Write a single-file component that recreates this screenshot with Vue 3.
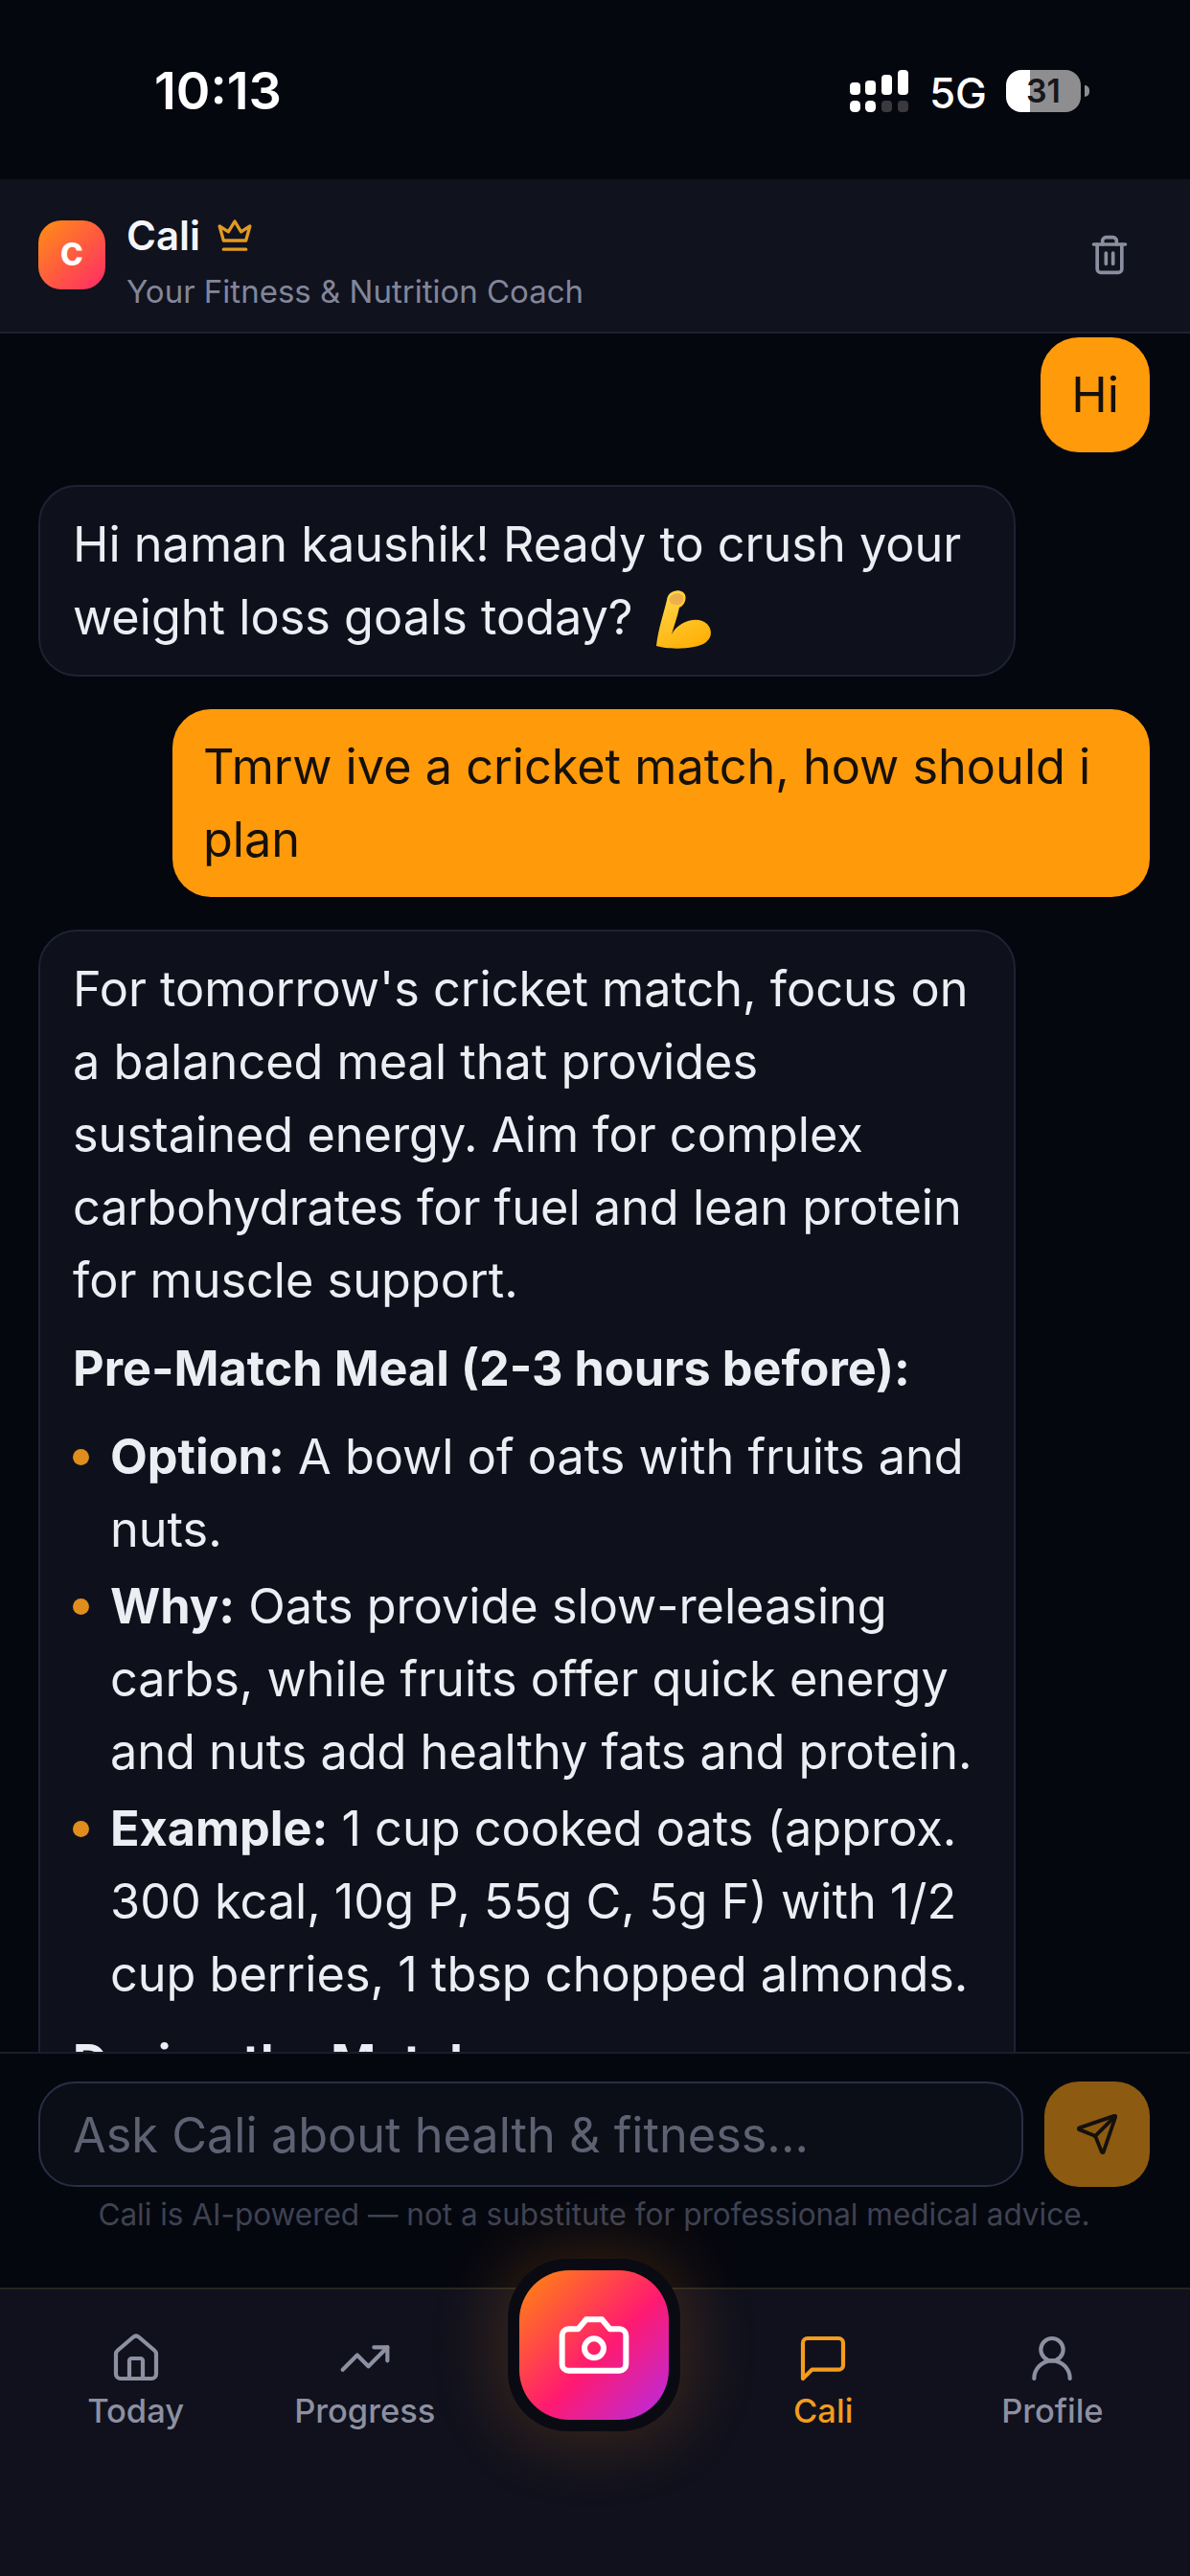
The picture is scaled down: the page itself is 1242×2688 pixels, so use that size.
<script setup>
const navLeft = [
  { label: 'Today', icon: 'home' },
  { label: 'Progress', icon: 'trend' },
]
const navRight = [
  { label: 'Cali', icon: 'chat', active: true },
  { label: 'Profile', icon: 'user' },
]
const tips = [
  { lead: 'Option:', text: ' A bowl of oats with fruits and nuts.' },
  { lead: 'Why:', text: ' Oats provide slow-releasing carbs, while fruits offer quick energy and nuts add healthy fats and protein.' },
  { lead: 'Example:', text: ' 1 cup cooked oats (approx. 300 kcal, 10g P, 55g C, 5g F) with 1/2 cup berries, 1 tbsp chopped almonds.' },
]
</script>

<template>
  <div class="app">
    <div class="status">
      <span class="time">10:13</span>
      <div class="status-right">
        <svg class="signal" width="66" height="46" viewBox="0 0 66 46" fill="#fff">
          <rect x="1" y="14" width="11" height="13" rx="4" />
          <rect x="17" y="12" width="11" height="15" rx="4" />
          <rect x="34" y="6" width="11" height="21" rx="4" />
          <rect x="51" y="1" width="11" height="26" rx="4" />
          <rect x="1" y="33" width="11" height="12" rx="4.5" />
          <rect x="17" y="33" width="11" height="12" rx="4.5" />
          <rect x="34" y="33" width="11" height="12" rx="4" fill="#3a3a3e" />
          <rect x="51" y="33" width="11" height="12" rx="4" fill="#3a3a3e" />
        </svg>
        <span class="net">5G</span>
        <div class="battery"><span>31</span></div>
        <span class="nub"></span>
      </div>
    </div>

    <header class="head">
      <div class="logo">C</div>
      <div class="title">
        <div class="name">
          <span>Cali</span>
          <svg width="40" height="40" viewBox="0 0 24 24" fill="none" stroke="#e39a22" stroke-width="2" stroke-linejoin="round" stroke-linecap="round">
            <path d="M5 15 2.500 6l5.500 3.500L12 3l4 6.500L21.500 6 19 15z" />
            <path d="M5 20.500h14" />
          </svg>
        </div>
        <div class="sub">Your Fitness &amp; Nutrition Coach</div>
      </div>
      <svg class="trash" width="44" height="44" viewBox="0 0 24 24" fill="none" stroke="#8b8e9e" stroke-width="2" stroke-linecap="round" stroke-linejoin="round">
        <path d="M3 6h18" />
        <path d="M19 6v14a2 2 0 0 1-2 2H7a2 2 0 0 1-2-2V6" />
        <path d="M8 6V4a2 2 0 0 1 2-2h4a2 2 0 0 1 2 2v2" />
        <path d="M10 11v6M14 11v6" />
      </svg>
    </header>

    <main class="msgs">
      <div class="bubble user">Hi</div>
      <div class="bubble ai">
        Hi naman kaushik! Ready to crush your weight loss goals today?
        <svg class="emoji" width="60" height="66" viewBox="0 0 60 66">
          <defs>
            <linearGradient id="arm" x1="0.2" y1="0" x2="0.6" y2="1">
              <stop offset="0" stop-color="#ffd84a" />
              <stop offset="1" stop-color="#ffb007" />
            </linearGradient>
          </defs>
          <path fill="url(#arm)" d="M2 60C4 42 10 25 13 12C14 3 24 0 30 4C35 8 32 18 26 20C24 30 20 40 18 48C24 36 40 30 50 34C60 38 62 50 54 56C44 64 14 64 2 60Z" />
          <path fill="#eeb04a" d="M16 10c2-5 10-6 13-3s1 9-4 10-11-2-9-7z" />
        </svg>
      </div>
      <div class="bubble user">Tmrw ive a cricket match, how should i plan</div>
      <div class="bubble ai long">
        <p>For tomorrow's cricket match, focus on a balanced meal that provides sustained energy. Aim for complex carbohydrates for fuel and lean protein for muscle support.</p>
        <p class="strong">Pre-Match Meal (2-3 hours before):</p>
        <ul>
          <li v-for="tip in tips" :key="tip.lead"><b>{{ tip.lead }}</b>{{ tip.text }}</li>
        </ul>
        <p class="strong">During the Match:</p>
      </div>
    </main>

    <section class="composer">
      <div class="row">
        <div class="field">Ask Cali about health &amp; fitness...</div>
        <button class="send" type="button">
          <svg width="46" height="46" viewBox="0 0 24 24" fill="none" stroke="#14110c" stroke-width="2" stroke-linecap="round" stroke-linejoin="round">
            <path d="M14.536 21.686a.5.5 0 0 0 .937-.024l6.500-19a.496.496 0 0 0-.635-.635l-19 6.500a.5.5 0 0 0-.024.937l7.930 3.180a2 2 0 0 1 1.112 1.110z" />
            <path d="m21.854 2.147-10.940 10.939" />
          </svg>
        </button>
      </div>
      <p class="note">Cali is AI-powered — not a substitute for professional medical advice.</p>
    </section>

    <nav class="nav">
      <div v-for="item in navLeft" :key="item.label" class="tab">
        <svg width="56" height="56" viewBox="0 0 24 24" fill="none" stroke="currentColor" stroke-width="1.800" stroke-linecap="round" stroke-linejoin="round">
          <template v-if="item.icon === 'home'">
            <path d="M15 21v-8a1 1 0 0 0-1-1h-4a1 1 0 0 0-1 1v8" />
            <path d="M3 10a2 2 0 0 1 .709-1.528l7-5.999a2 2 0 0 1 2.582 0l7 5.999A2 2 0 0 1 21 10v9a2 2 0 0 1-2 2H5a2 2 0 0 1-2-2z" />
          </template>
          <template v-else>
            <path d="M22 7l-8.500 8.500-5-5L2 17" />
            <path d="M16 7h6v6" />
          </template>
        </svg>
        <span>{{ item.label }}</span>
      </div>
      <div class="cam-slot">
        <div class="cam">
          <div class="cam-face">
            <svg width="80" height="80" viewBox="0 0 24 24" fill="none" stroke="#fff" stroke-width="1.800" stroke-linecap="round" stroke-linejoin="round">
              <path d="M14.500 4h-5L7 7H4a2 2 0 0 0-2 2v9a2 2 0 0 0 2 2h16a2 2 0 0 0 2-2V9a2 2 0 0 0-2-2h-3z" />
              <circle cx="12" cy="13" r="3" />
            </svg>
          </div>
        </div>
      </div>
      <div v-for="item in navRight" :key="item.label" class="tab" :class="{ on: item.active }">
        <svg width="56" height="56" viewBox="0 0 24 24" fill="none" stroke="currentColor" stroke-width="1.800" stroke-linecap="round" stroke-linejoin="round">
          <path v-if="item.icon === 'chat'" d="M21 15a2 2 0 0 1-2 2H7l-4 4V5a2 2 0 0 1 2-2h14a2 2 0 0 1 2 2z" />
          <template v-else>
            <circle cx="12" cy="8" r="5" />
            <path d="M4 21a8 8 0 0 1 16 0" />
          </template>
        </svg>
        <span>{{ item.label }}</span>
      </div>
    </nav>
  </div>
</template>

<style scoped>
.app {
  width: 1242px;
  height: 2688px;
  display: flex;
  flex-direction: column;
  overflow: hidden;
  background: #05070f;
  color: #eef0f6;
  font-family: Inter, "Liberation Sans", sans-serif;
}
.status {
  height: 187px;
  flex: none;
  display: flex;
  align-items: flex-start;
  justify-content: space-between;
  padding: 64px 105px 0 161px;
  box-sizing: border-box;
}
.time {
  font-size: 54px;
  line-height: 62px;
  font-weight: 600;
  color: #fff;
}
.status-right {
  display: flex;
  align-items: center;
  margin-top: 5px;
}
.signal { margin-right: 18px; }
.net {
  font-size: 44px;
  line-height: 46px;
  font-weight: 500;
  color: #fff;
  margin: 5px 20px 0 0;
}
.battery {
  width: 78px;
  height: 44px;
  border-radius: 16px;
  background: linear-gradient(90deg, #fff 0 32%, #8e8e90 32% 100%);
  display: flex;
  align-items: center;
  justify-content: center;
  font-size: 34px;
  font-weight: 600;
  color: #17171b;
}
.nub {
  width: 5px;
  height: 12px;
  margin-left: 4px;
  border-radius: 0 6px 6px 0;
  background: #8e8e90;
}
.head {
  height: 161px;
  flex: none;
  box-sizing: border-box;
  display: flex;
  align-items: center;
  padding: 0 62px 0 40px;
  background: #10121e;
  border-bottom: 2px solid #1f2230;
}
.logo {
  width: 70px;
  height: 72px;
  margin-top: -2px;
  flex: none;
  border-radius: 24px;
  background: linear-gradient(135deg, #ff8f14, #ff2a68);
  display: flex;
  align-items: center;
  justify-content: center;
  font-size: 32px;
  font-weight: 800;
  color: #fff;
}
.title {
  margin-left: 22px;
  flex: 1;
  margin-top: 12px;
}
.name {
  display: flex;
  align-items: center;
  gap: 16px;
  font-size: 42px;
  line-height: 48px;
  font-weight: 600;
  color: #f4f5fa;
}
.sub {
  margin-top: 14px;
  font-size: 33px;
  line-height: 40px;
  color: #83869a;
}
.trash { margin-top: -2px; }
.msgs {
  flex: 1;
  min-height: 0;
  overflow: hidden;
  display: flex;
  flex-direction: column;
  gap: 34px;
  padding: 4px 42px 0 40px;
}
.bubble {
  flex: none;
  box-sizing: border-box;
  font-size: 50.400px;
  line-height: 76px;
  padding: 22px 32px;
  border-radius: 36px;
}
.user {
  align-self: flex-end;
  max-width: 1020px;
  background: #ff9a0a;
  color: #15100a;
  border-radius: 40px;
}
.ai {
  align-self: flex-start;
  width: 1020px;
  background: #0e101b;
  border: 2px solid #1e2233;
  color: #eceef4;
  padding: 22px 34px;
  border-radius: 40px;
}
.emoji {
  vertical-align: -18px;
  margin-left: 8px;
}
.long p { margin: 0; }
.long .strong {
  margin-top: 16px;
  font-weight: 700;
}
.long ul {
  list-style: none;
  margin: 16px 0 0;
  padding: 0;
}
.long li {
  position: relative;
  padding-left: 39px;
  margin-bottom: 4px;
}
.long li::before {
  content: "";
  position: absolute;
  left: 0;
  top: 30px;
  width: 17px;
  height: 17px;
  border-radius: 50%;
  background: #df8d1c;
}
.long b { font-weight: 700; }
.composer {
  flex: none;
  height: 246px;
  box-sizing: border-box;
  padding: 29px 42px 0 40px;
  border-top: 2px solid #1a1d2a;
  background: #05070f;
}
.row {
  display: flex;
  gap: 22px;
}
.field {
  flex: 1;
  height: 110px;
  box-sizing: border-box;
  display: flex;
  align-items: center;
  padding: 0 34px;
  border: 2px solid #2a2e45;
  border-radius: 38px;
  background: #0b0d17;
  font-size: 50.400px;
  color: #5e6172;
}
.send {
  width: 110px;
  height: 110px;
  padding: 0;
  border: 0;
  border-radius: 36px;
  background: #8c5a10;
  display: flex;
  align-items: center;
  justify-content: center;
}
.note {
  margin: 10px 0 0;
  text-align: center;
  font-size: 31.500px;
  line-height: 38px;
  color: #3f4252;
}
.nav {
  flex: none;
  height: 301px;
  box-sizing: border-box;
  position: relative;
  z-index: 2;
  display: grid;
  grid-template-columns: repeat(5, 1fr);
  padding: 44px 24px 0 22px;
  align-items: start;
  background: #10111d;
  border-top: 2px solid #262420;
}
.tab {
  display: flex;
  flex-direction: column;
  align-items: center;
  gap: 5px;
  color: #8d90a1;
  font-size: 34.500px;
  line-height: 44px;
  font-weight: 500;
}
.tab.on { color: #f39c1f; }
.cam-slot {
  display: flex;
  justify-content: center;
  margin-top: -76px;
}
.cam {
  width: 180px;
  height: 180px;
  flex: none;
  box-sizing: border-box;
  padding: 12px;
  border-radius: 62px;
  background: #0a0a12;
  box-shadow: 0 0 70px 12px rgba(255, 140, 20, 0.18);
}
.cam-face {
  width: 100%;
  height: 100%;
  border-radius: 52px;
  background: linear-gradient(135deg, #ff8a0c 0%, #ff1a70 55%, #b52ce6 100%);
  display: flex;
  align-items: center;
  justify-content: center;
}
</style>

<style>
html, body { background: #05070f; }
</style>
